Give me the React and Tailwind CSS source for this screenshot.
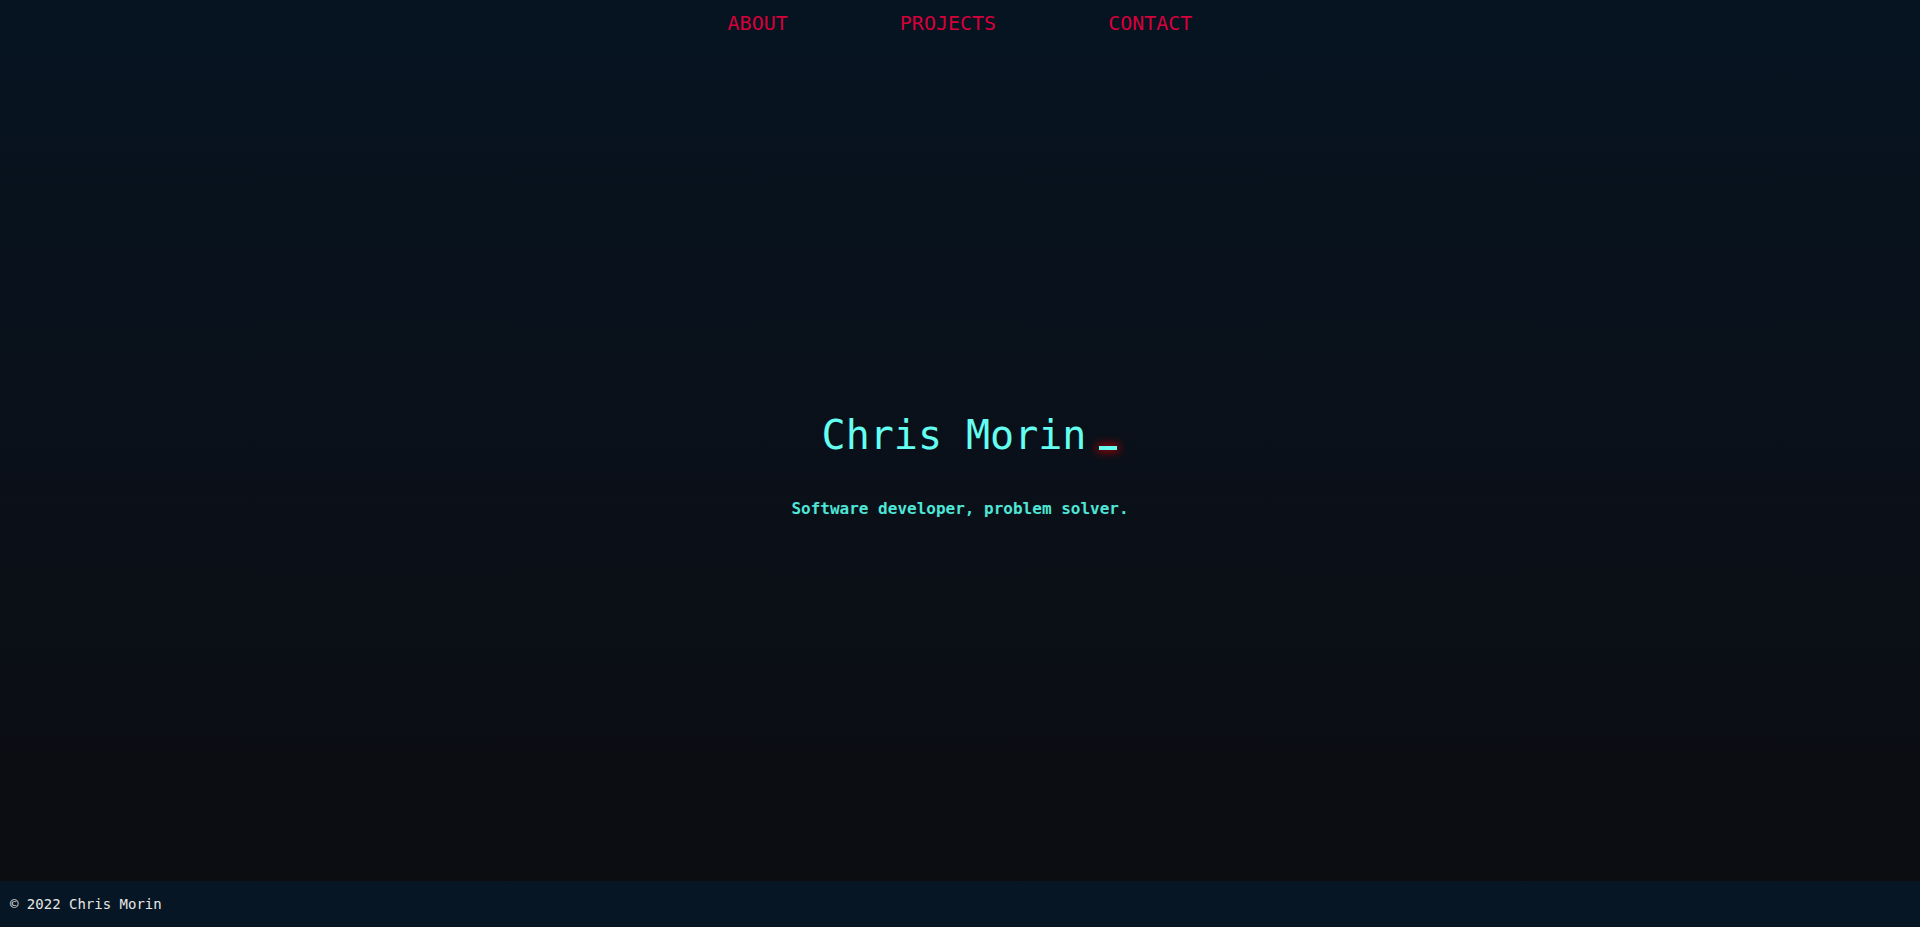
import React from 'react';

const mono = { fontFamily: '"DejaVu Sans Mono", "Liberation Mono", monospace' };

// nav links across the top
const links = ['ABOUT', 'PROJECTS', 'CONTACT'];

export default function App() {
    return (
        <div style={mono} className="h-screen w-full flex flex-col bg-gradient-to-b from-[#061421] via-[#0a1019] to-[#0c0c10] overflow-hidden">
            <nav className="h-[46px] flex items-center justify-center gap-[112px]">
                {links.map((l) => (
                    <a key={l} href="#" className="text-[20px] leading-none text-[#d6003b] tracking-normal">
                        {l}
                    </a>
                ))}
            </nav>

            <main className="flex-1 flex flex-col items-center justify-center pb-[2px]">
                <div className="flex items-end pl-[19px]">
                    <h1 className="text-[40px] leading-[60px] text-[#64fff0]">Chris Morin</h1>
                    <span className="ml-[13px] mb-[15px] w-[18px] h-[4px] bg-[#64fff0] shadow-[0_0_8px_2px_rgba(200,0,0,0.75)]"></span>
                </div>
                <p className="mt-[32px] text-[16px] leading-[24px] font-bold text-[#4ee6d6]">
                    Software developer, problem solver.
                </p>
            </main>

            <footer className="h-[46px] shrink-0 flex items-center px-[10px] bg-[#061624]">
                <span className="text-[14px] text-[#e6e6e6]">© 2022 Chris Morin</span>
            </footer>
        </div>
    );
}
